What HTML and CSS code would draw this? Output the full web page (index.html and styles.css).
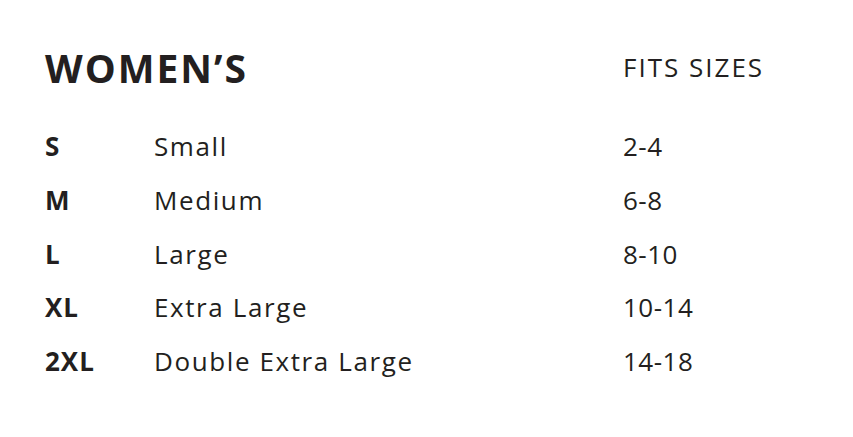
FILE: index.html
```html
<!DOCTYPE html>
<html>
<head>
<meta charset="utf-8">
<link rel="stylesheet" href="styles.css">
</head>
<body>
<div class="chart">
  <div class="head">
    <h1 class="title">WOMEN’S</h1>
    <div class="fits-head">FITS SIZES</div>
  </div>
  <div class="row"><span class="code">S</span><span class="desc">Small</span><span class="fits">2-4</span></div>
  <div class="row"><span class="code">M</span><span class="desc">Medium</span><span class="fits">6-8</span></div>
  <div class="row"><span class="code">L</span><span class="desc">Large</span><span class="fits">8-10</span></div>
  <div class="row"><span class="code">XL</span><span class="desc">Extra Large</span><span class="fits">10-14</span></div>
  <div class="row"><span class="code">2XL</span><span class="desc">Double Extra Large</span><span class="fits">14-18</span></div>
</div>
</body>
</html>
```
FILE: styles.css
```css
html, body {
  margin: 0;
  padding: 0;
  background: #ffffff;
}
body {
  font-family: "Open Sans", "Liberation Sans", sans-serif;
  color: #231f20;
}
.chart {
  padding: 43px 0 0 45px;
}
.head {
  display: grid;
  grid-template-columns: 578px auto;
  align-items: start;
  height: 77px;
}
.title {
  margin: 0;
  font-size: 39px;
  font-weight: 700;
  letter-spacing: 2px;
  line-height: 50px;
}
.fits-head {
  margin-top: 9px;
  font-size: 26px;
  letter-spacing: 2px;
  line-height: 30px;
}
.row {
  display: grid;
  grid-template-columns: 109px 469px auto;
  font-size: 26px;
  line-height: 53.8px;
  height: 53.8px;
}
.code {
  font-weight: 700;
  letter-spacing: 1px;
}
.desc {
  letter-spacing: 1.6px;
}
.fits {
  letter-spacing: 0.5px;
}
```
